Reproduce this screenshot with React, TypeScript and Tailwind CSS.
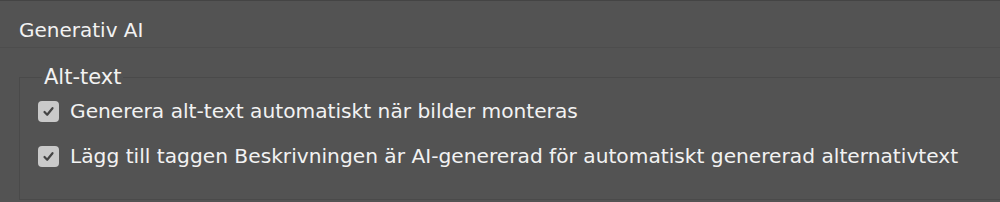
export default function App() {
  const items = [
    'Generera alt-text automatiskt när bilder monteras',
    'Lägg till taggen Beskrivningen är AI-genererad för automatiskt genererad alternativtext',
  ];

  return (
    <div
      className="w-[1000px] h-[202px] overflow-hidden bg-[#535353] border-t border-[#444444] text-[#f2f2f2]"
      style={{ fontFamily: '"DejaVu Sans", "Noto Sans", sans-serif' }}
    >
      <div className="h-[47px] pl-[19px] pt-[17px] border-b border-[#4d4d4d] text-[20px] leading-[24px]">
        Generativ AI
      </div>

      <fieldset className="ml-[19px] mt-[18px] h-[134px] border-l border-t border-b border-[#4a4a4a] pl-[18px]">
        <legend className="ml-[4px] px-[2px] text-[21px] leading-[22px]">Alt-text</legend>

        <div className="flex flex-col gap-[23px] pt-[12px]">
          {items.map((label) => (
            <label key={label} className="flex items-center gap-[11px] text-[20.2px] leading-[22px]">
              <span className="w-[21px] h-[21px] rounded-[4px] bg-[#c9c9c9] flex items-center justify-center shrink-0">
                <svg width="13" height="13" viewBox="0 0 13 13" fill="none">
                  <path
                    d="M2.5 7 L5.2 9.8 L10.5 3.2"
                    stroke="#444444"
                    strokeWidth="2.2"
                    strokeLinecap="round"
                    strokeLinejoin="round"
                  />
                </svg>
              </span>
              {label}
            </label>
          ))}
        </div>
      </fieldset>
    </div>
  );
}
